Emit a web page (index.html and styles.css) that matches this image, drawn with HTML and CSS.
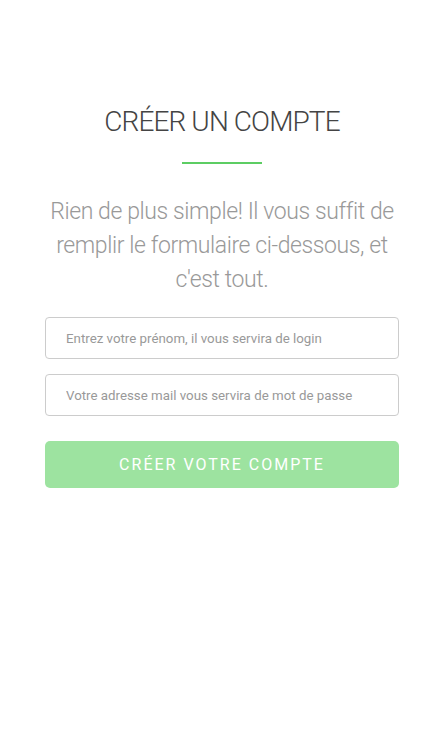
FILE: index.html
```html
<!DOCTYPE html>
<html lang="fr">
<head>
<meta charset="utf-8">
<title>Créer un compte</title>
<link rel="stylesheet" href="styles.css">
</head>
<body>
<main class="page">
  <h1 class="title">CRÉER UN COMPTE</h1>
  <div class="divider"></div>
  <p class="lead">Rien de plus simple! Il vous suffit de remplir le formulaire ci-dessous, et c'est tout.</p>
  <form class="form">
    <input class="field" type="text" placeholder="Entrez votre prénom, il vous servira de login">
    <input class="field" type="email" placeholder="Votre adresse mail vous servira de mot de passe">
    <button class="submit" type="button">CRÉER VOTRE COMPTE</button>
  </form>
</main>
</body>
</html>
```
FILE: styles.css
```css
html, body {
  margin: 0;
  padding: 0;
  background: #fff;
}
body {
  font-family: Roboto, "Open Sans", sans-serif;
  color: #444;
}
.page {
  display: flex;
  flex-direction: column;
  align-items: center;
  padding: 102px 28px 0 45px;
}
.title {
  margin: 0;
  font-size: 28px;
  font-weight: 300;
  color: #444;
  line-height: 40px;
  letter-spacing: -0.9px;
}
.divider {
  width: 80px;
  height: 2px;
  background: #5ccd63;
  margin-top: 20px;
}
.lead {
  margin: 31px 0 0;
  font-size: 23px;
  font-weight: 300;
  line-height: 34px;
  color: #999;
  text-align: center;
  letter-spacing: -0.4px;
}
.form {
  align-self: stretch;
  display: flex;
  flex-direction: column;
  margin-top: 20px;
}
.field {
  height: 42px;
  box-sizing: border-box;
  border: 1px solid #ccc;
  border-radius: 4px;
  padding: 0 20px;
  font-family: inherit;
  font-size: 13.3px;
  color: #555;
  margin-bottom: 15px;
  outline: none;
}
.field::placeholder {
  color: #999;
}
.submit {
  margin-top: 10px;
  height: 47px;
  border: 0;
  border-radius: 5px;
  background: #9de3a0;
  color: #fff;
  font-family: inherit;
  font-size: 16px;
  letter-spacing: 2px;
  font-weight: 400;
}
```
